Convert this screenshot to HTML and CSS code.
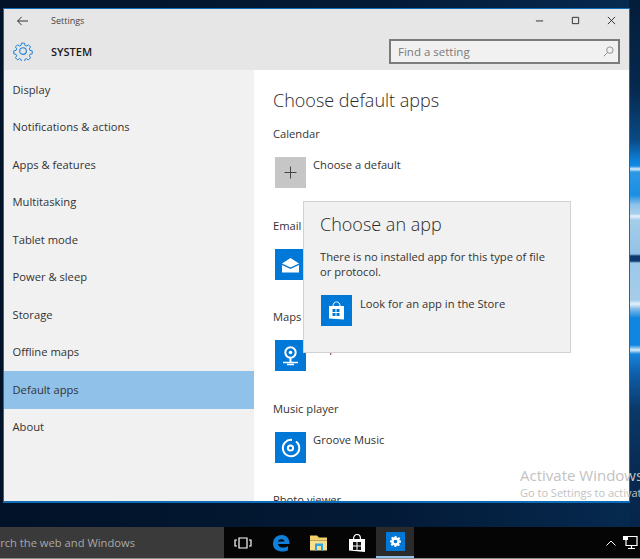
FILE: index.html
```html
<!DOCTYPE html>
<html lang="en">
<head>
<meta charset="utf-8">
<title>Settings</title>
<link rel="stylesheet" href="styles.css">
</head>
<body>
<div class="desktop">
  <div class="window">
    <header class="chrome">
      <div class="titlebar">
        <svg class="back" viewBox="0 0 12 10"><path d="M5 .5 .7 5 5 9.5M.7 5H12" fill="none" stroke="#222" stroke-width="1"/></svg>
        <span class="wintitle">Settings</span>
        <div class="controls">
          <svg viewBox="0 0 10 10"><path d="M1 5.5h8" stroke="#222" stroke-width="1"/></svg>
          <svg viewBox="0 0 10 10"><path d="M1.500 1.500h7v7h-7z" fill="none" stroke="#222" stroke-width="1"/></svg>
          <svg viewBox="0 0 10 10"><path d="M1 1l8 8M9 1l-8 8" stroke="#222" stroke-width="1"/></svg>
        </div>
      </div>
      <div class="headbar">
        <svg class="gear" viewBox="0 0 24 24" fill="none" stroke="#1b7fd8" stroke-width="1.300"><path d="M10 1.500h4l.6 3 2 .9 2.600-1.700 2.900 2.900-1.700 2.600.9 2 3 .6v4l-3 .6-.9 2 1.700 2.600-2.900 2.900-2.600-1.700-2 .9-.6 3h-4l-.6-3-2-.9-2.600 1.700-2.900-2.900 1.700-2.600-.9-2-3-.6v-4l3-.6.9-2-1.700-2.600 2.900-2.900 2.600 1.700 2-.9z" transform="translate(1.200 1.200) scale(.9)"/><circle cx="12" cy="12" r="4"/></svg>
        <span class="system">SYSTEM</span>
        <div class="search">
          <span>Find a setting</span>
          <svg viewBox="0 0 12 12" fill="none" stroke="#8a8a8a" stroke-width="1"><circle cx="7.500" cy="4.500" r="3.500"/><path d="M5 7 .8 11.200"/></svg>
        </div>
      </div>
    </header>
    <div class="content">
      <nav class="sidebar">
        <a class="navitem">Display</a>
        <a class="navitem">Notifications &amp; actions</a>
        <a class="navitem">Apps &amp; features</a>
        <a class="navitem">Multitasking</a>
        <a class="navitem">Tablet mode</a>
        <a class="navitem">Power &amp; sleep</a>
        <a class="navitem">Storage</a>
        <a class="navitem">Offline maps</a>
        <a class="navitem selected">Default apps</a>
        <a class="navitem">About</a>
      </nav>
      <main class="main">
        <h1>Choose default apps</h1>
        <section class="group">
          <h2>Calendar</h2>
          <div class="app">
            <span class="tile grey"><svg viewBox="0 0 31 31"><path d="M15.500 9.500v12M9.500 15.500h12" stroke="#444" stroke-width="1"/></svg></span>
            <span>Choose a default</span>
          </div>
        </section>
        <section class="group">
          <h2>Email</h2>
          <div class="app">
            <span class="tile"><svg viewBox="0 0 31 31"><path d="M7 14.500 15.500 9 24 14.500 15.500 18.500z" fill="#fff"/><path d="M7 16v7.500h17V16l-8.500 4z" fill="#fff"/></svg></span>
            <span>Mail</span>
          </div>
        </section>
        <section class="group">
          <h2>Maps</h2>
          <div class="app">
            <span class="tile"><svg viewBox="0 0 31 31" fill="none" stroke="#fff"><circle cx="15.500" cy="12.500" r="5.200" stroke-width="2"/><circle cx="15.500" cy="12.500" r="1.800" fill="#fff" stroke="none"/><path d="M15.500 18v4.500" stroke-width="2"/><path d="M8 22.500h15M12 24.500h7" stroke-width="1.500"/></svg></span>
            <span>Maps</span>
          </div>
        </section>
        <section class="group">
          <h2>Music player</h2>
          <div class="app">
            <span class="tile"><svg viewBox="0 0 31 31" fill="none" stroke="#fff"><path d="M21 9.500a8.200 8.200 0 1 1-4-1.600" stroke-width="2"/><circle cx="15.500" cy="16" r="2.600" stroke-width="2"/></svg></span>
            <span>Groove Music</span>
          </div>
        </section>
        <section class="group">
          <h2>Photo viewer</h2>
        </section>
      </main>
    </div>
    <aside class="flyout">
      <h3>Choose an app</h3>
      <p>There is no installed app for this type of file or protocol.</p>
      <div class="storelink">
        <span class="tile"><svg viewBox="0 0 31 31"><path d="M8 11h15v13.500L8 23.500z" fill="#fff"/><path d="M12 11c0-5.500 7-5.500 7 0" fill="none" stroke="#fff" stroke-width="1"/><path d="M11.500 14h3v3h-3zM15.500 14h3v3h-3zM11.500 18h3v3h-3zM15.500 18h3v3h-3z" fill="#0078d7"/></svg></span>
        <span class="storetext">Look for an app in the Store</span>
      </div>
    </aside>
  </div>
  <div class="watermark">
    <div class="wm-title">Activate Windows</div>
    <div class="wm-sub">Go to Settings to activate Windows.</div>
  </div>
  <footer class="taskbar">
    <div class="tasksearch"><span>Search the web and Windows</span></div>
    <div class="taskicons">
      <span class="task"><svg viewBox="0 0 18 12" fill="none" stroke="#fff" stroke-width="1.200"><path d="M5 1h8v10H5zM3 3H1v6h2M15 3h2v6h-2"/></svg></span>
      <span class="task"><svg viewBox="0 0 18 18"><path d="M1 10C1 4 5 1 10 1c5 0 7.500 4 7.500 9H6c.3 4 6.500 4.500 10 2.300v4C11 19 1 17.500 1 10zM6 7.500h6.500C12.400 4.500 6.500 4.500 6 7.500z" fill="#0f7fdc"/></svg></span>
      <span class="task"><svg viewBox="0 0 18 17"><path d="M0 1h7l2 2h8v3H0z" fill="#f3d06b"/><path d="M0 6h17v10H0z" fill="#f8df8e"/><path d="M5 9h8v7h-2v-4.500H7V16H5z" fill="#2fa6e3"/></svg></span>
      <span class="task"><svg viewBox="0 0 18 18"><path d="M1 5h16v13L1 16.500z" fill="#fff"/><path d="M5.500 5c0-6 7-6 7 0" fill="none" stroke="#fff" stroke-width="1.200"/><path d="M5 8h3.500v3.500H5zM9.500 8H13v3.500H9.500zM5 12.500h3.500V16H5zM9.500 12.500H13V16H9.500z" fill="#111"/></svg></span>
      <span class="task active"><span class="settingstile"><svg viewBox="0 0 12 12"><path d="M5 0h2l.3 1.600 1.100.5 1.400-.9 1.400 1.400-.9 1.400.5 1.100L12 5v2l-1.600.3-.5 1.100.9 1.400-1.400 1.400-1.400-.9-1.100.5L7 12H5l-.3-1.600-1.100-.5-1.400.9L.8 9.400l.9-1.400-.5-1.100L0 7V5l1.600-.3.5-1.100-.9-1.400L2.600.8l1.400.9 1.100-.5zM6 4a2 2 0 1 0 0 4 2 2 0 0 0 0-4z" fill="#fff" fill-rule="evenodd"/></svg></span></span>
    </div>
    <div class="tray">
      <svg class="chev" viewBox="0 0 10 6"><path d="M.5 5.500 5 1l4.500 4.500" fill="none" stroke="#fff" stroke-width="1"/></svg>
      <svg class="net" viewBox="0 0 15 15" fill="none" stroke="#fff" stroke-width="1.200"><path d="M3 1.500h11v9H3zM8.500 10.500v3M5 13.500h7"/><path d="M0 1h5v4H0z" fill="#fff" stroke="none"/></svg>
    </div>
  </footer>
</div>
</body>
</html>
```

FILE: styles.css
```css
* { box-sizing: border-box; margin: 0; padding: 0; }
html, body { width: 640px; height: 559px; overflow: hidden; background: #031a33; }
body { font-family: "Open Sans", "Noto Sans", sans-serif; color: #2b2b2b; font-size: 11px; }

.desktop {
  position: relative;
  width: 640px;
  height: 559px;
  overflow: hidden;
  background:
    linear-gradient(180deg, #031d3a 0, #06294f 90px, #0a4a86 140px, #0d7fd8 160px, #0f8be6 166px, #d9eefa 169px, #2c98e6 172px, #1a8fe3 195px, #8fc3ea 205px, #a8d0ec 214px, #e5f2fa 216px, #a5cdea 220px, #94c2e6 254px, #0d3a6e 256px, #0d3a6e 261px, #9cc8ea 263px, #a5cdea 300px, #e5f2fa 304px, #7fbbe8 309px, #0f86e2 318px, #0f86e2 345px, #d9eefa 350px, #1784dc 354px, #0d5da8 375px, #0a3868 410px, #07294f 480px, #07254a 527px) right top / 11px 100% no-repeat,
    linear-gradient(90deg, #021228 0, #031a36 60%, #062a50 100%);
}

.window {
  position: absolute;
  left: 3px;
  top: 8px;
  width: 627px;
  height: 495px;
  display: flex;
  flex-direction: column;
  border: 1px solid #0f6cb8;
  border-bottom-width: 2px;
  background: #fff;
  overflow: hidden;
}

.chrome { background: #e6e6e6; height: 61px; flex: none; display: flex; flex-direction: column; }
.titlebar { height: 23px; flex: none; display: flex; align-items: center; padding-left: 13px; }
.back { width: 11px; height: 10px; margin-right: 23px; }
.wintitle { font-size: 9px; color: #444; }
.controls { margin-left: auto; display: flex; gap: 27px; padding-right: 13px; }
.controls svg { width: 9px; height: 9px; }
.headbar { flex: 1; display: flex; align-items: center; padding-left: 9px; padding-right: 9px; }
.gear { width: 20px; height: 20px; margin-right: 18px; }
.system { font-size: 11px; font-weight: 600; color: #1a1a1a; }
.search {
  margin-left: auto;
  width: 231px;
  height: 25px;
  border: 2px solid #7b7b7b;
  background: #f1f1f1;
  display: flex;
  align-items: center;
  justify-content: space-between;
  padding: 0 4px 0 7px;
  font-size: 11.5px;
  color: #7a7a7a;
}
.search svg { width: 11px; height: 11px; }

.content { flex: 1; display: flex; min-height: 0; }
.sidebar { width: 250px; flex: none; background: #f1f1f1; padding-top: 1px; display: flex; flex-direction: column; }
.navitem { height: 37.5px; flex: none; display: flex; align-items: center; padding: 0 0 1px 8.5px; font-size: 11.2px; color: #333; }
.navitem.selected { background: #90c1e9; }

.main { flex: 1; background: #fff; padding: 18px 0 0 19px; overflow: hidden; }
h1 { font-size: 18px; font-weight: 300; line-height: 24px; height: 38px; color: #2a2a2a; }
.group { height: 91.5px; }
h2 { font-size: 11.2px; font-weight: 400; line-height: 16px; height: 31px; color: #333; }
.app { display: flex; gap: 7px; padding-left: 2px; font-size: 11.2px; line-height: 16px; color: #333; }
.tile { width: 31px; height: 31px; flex: none; background: #0078d7; display: block; }
.tile svg { display: block; width: 31px; height: 31px; }
.tile.grey { background: #c6c6c6; }

.flyout {
  position: absolute;
  left: 299px;
  top: 192px;
  width: 268px;
  height: 152px;
  background: #f1f1f1;
  border: 1px solid #d2d2d2;
  padding: 9px 16px 0;
}
h3 { font-size: 18px; font-weight: 300; line-height: 26px; height: 38px; color: #2a2a2a; }
.flyout p { font-size: 11.2px; line-height: 15px; height: 46px; width: 235px; color: #333; }
.storelink { display: flex; gap: 8px; padding-left: 1px; font-size: 11.2px; line-height: 16px; color: #333; }
.storetext { padding-top: 1px; }

.watermark { position: absolute; left: 520px; top: 466px; white-space: nowrap; color: #c2c2c2; }
.wm-title { font-size: 15px; line-height: 18px; }
.wm-sub { font-size: 11px; line-height: 18px; }

.taskbar {
  position: absolute;
  left: 0;
  right: 0;
  top: 527px;
  height: 32px;
  background: #050505;
  border-bottom: 1px solid #8d8d8d;
  display: flex;
  align-items: stretch;
}
.tasksearch {
  width: 224px;
  background: #3a3a3a;
  color: #a8a8a8;
  font-size: 11.2px;
  display: flex;
  align-items: center;
  justify-content: flex-end;
  overflow: hidden;
  white-space: nowrap;
  padding-right: 89px;
}
.tasksearch span { flex: none; }
.taskicons { display: flex; }
.task { width: 38px; display: flex; align-items: center; justify-content: center; }
.task svg { width: 18px; height: 18px; }
.task.active { background: #2b2b2b; border-bottom: 2px solid #8fc3ea; }
.settingstile { width: 19px; height: 19px; background: #0078d7; display: flex; align-items: center; justify-content: center; }
.settingstile svg { width: 11px; height: 11px; }
.tray { margin-left: auto; display: flex; align-items: center; gap: 7px; padding-right: 2px; }
.chev { width: 10px; height: 6px; }
.net { width: 15px; height: 15px; }
```
